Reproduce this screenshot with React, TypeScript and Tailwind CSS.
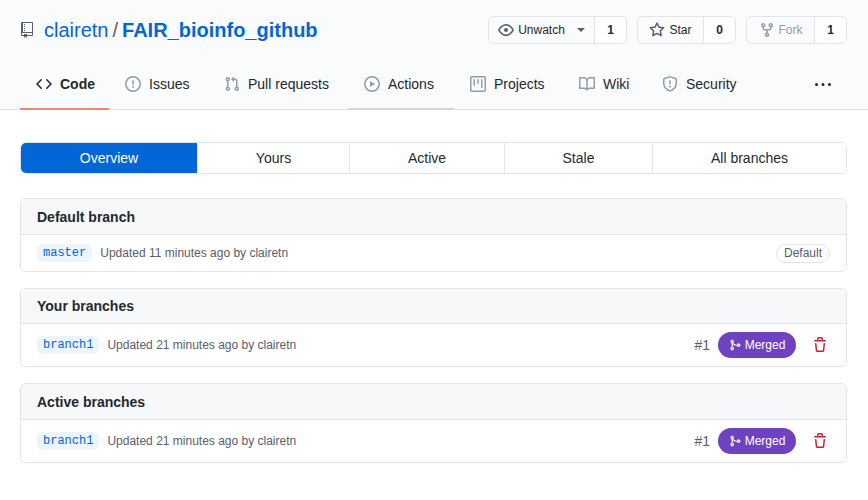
import React from 'react';

const paths = {
	repo: 'M4 9H3V8h1v1zm0-3H3v1h1V6zm0-2H3v1h1V4zm0-2H3v1h1V2zm8-1v12c0 .55-.45 1-1 1H6v2l-1.5-1.5L3 16v-2H1c-.55 0-1-.45-1-1V1c0-.55.45-1 1-1h10c.55 0 1 .45 1 1zm-1 10H1v2h2v-1h3v1h5v-2zm0-10H2v9h9V1z',
	code: 'M4.72 3.22a.75.75 0 011.06 1.06L2.06 8l3.72 3.72a.75.75 0 11-1.06 1.06L.47 8.53a.75.75 0 010-1.06l4.25-4.25zm6.56 0a.75.75 0 10-1.06 1.06L13.94 8l-3.72 3.72a.75.75 0 101.06 1.06l4.25-4.25a.75.75 0 000-1.06l-4.25-4.25z',
	issue: 'M8 1.5a6.5 6.5 0 100 13 6.5 6.5 0 000-13zM0 8a8 8 0 1116 0A8 8 0 010 8zm9 3a1 1 0 11-2 0 1 1 0 012 0zm-.25-6.25a.75.75 0 00-1.5 0v3.5a.75.75 0 001.5 0v-3.5z',
	pull: 'M7.177 3.073L9.573.677A.25.25 0 0110 .854v4.792a.25.25 0 01-.427.177L7.177 3.427a.25.25 0 010-.354zM3.75 2.5a.75.75 0 100 1.5.75.75 0 000-1.5zm-2.25.75a2.25 2.25 0 113 2.122v5.256a2.251 2.251 0 11-1.5 0V5.372A2.25 2.25 0 011.5 3.25zM11 2.5h-1V4h1a1 1 0 011 1v5.628a2.251 2.251 0 101.5 0V5A2.5 2.5 0 0011 2.5zm1 10.25a.75.75 0 111.5 0 .75.75 0 01-1.5 0zM3.75 12a.75.75 0 100 1.5.75.75 0 000-1.5z',
	play: 'M1.5 8a6.5 6.5 0 1113 0 6.5 6.5 0 01-13 0zM8 0a8 8 0 100 16A8 8 0 008 0zM6.379 5.227A.25.25 0 006 5.442v5.117a.25.25 0 00.379.214l4.264-2.559a.25.25 0 000-.428L6.379 5.227z',
	project: 'M1.75 0A1.75 1.75 0 000 1.75v12.5C0 15.216.784 16 1.75 16h12.5A1.75 1.75 0 0016 14.25V1.75A1.75 1.75 0 0014.25 0H1.75zM1.5 1.75a.25.25 0 01.25-.25h12.5a.25.25 0 01.25.25v12.5a.25.25 0 01-.25.25H1.75a.25.25 0 01-.25-.25V1.75zM11.75 3a.75.75 0 00-.75.75v7.5a.75.75 0 001.5 0v-7.5a.75.75 0 00-.75-.75zm-8.25.75a.75.75 0 011.5 0v5.5a.75.75 0 01-1.5 0v-5.5zM8 3a.75.75 0 00-.75.75v3.5a.75.75 0 001.5 0v-3.5A.75.75 0 008 3z',
	book: 'M0 1.75A.75.75 0 01.75 1h4.253c1.227 0 2.317.59 3 1.501A3.744 3.744 0 0111.006 1h4.245a.75.75 0 01.75.75v10.5a.75.75 0 01-.75.75h-4.507a2.25 2.25 0 00-1.591.659l-.622.621a.75.75 0 01-1.06 0l-.622-.621A2.25 2.25 0 005.258 13H.75a.75.75 0 01-.75-.75V1.75zm8.755 3a2.25 2.25 0 012.25-2.25H14.5v9h-3.757c-.71 0-1.4.201-1.992.572l.004-7.322zm-1.504 7.324l.004-5.073-.002-2.253A2.25 2.25 0 005.003 2.5H1.5v9h3.757a3.75 3.75 0 011.994.574z',
	shield: 'M7.467.133a1.75 1.75 0 011.066 0l5.25 1.68A1.75 1.75 0 0115 3.48V7c0 1.566-.32 3.182-1.303 4.682-.983 1.498-2.585 2.813-5.032 3.855a1.7 1.7 0 01-1.33 0c-2.447-1.042-4.049-2.357-5.032-3.855C1.32 10.182 1 8.566 1 7V3.48a1.75 1.75 0 011.217-1.667l5.25-1.68zm.61 1.429a.25.25 0 00-.153 0l-5.25 1.68a.25.25 0 00-.174.238V7c0 1.358.275 2.666 1.057 3.86.784 1.194 2.121 2.34 4.366 3.297a.2.2 0 00.154 0c2.245-.956 3.582-2.104 4.366-3.298C13.225 9.666 13.5 8.36 13.5 7V3.48a.25.25 0 00-.174-.237l-5.25-1.68zM9 10.5a1 1 0 11-2 0 1 1 0 012 0zm-.25-5.75a.75.75 0 10-1.5 0v3a.75.75 0 001.5 0v-3z',
	eye: 'M1.679 7.932c.412-.621 1.242-1.75 2.366-2.717C5.175 4.242 6.527 3.5 8 3.5c1.473 0 2.824.742 3.955 1.715 1.124.967 1.954 2.096 2.366 2.717a.119.119 0 010 .136c-.412.621-1.242 1.75-2.366 2.717C10.825 11.758 9.473 12.5 8 12.5c-1.473 0-2.824-.742-3.955-1.715C2.92 9.818 2.09 8.69 1.679 8.068a.119.119 0 010-.136zM8 2c-1.981 0-3.67.992-4.933 2.078C1.797 5.169.88 6.423.43 7.1a1.619 1.619 0 000 1.798c.45.678 1.367 1.932 2.637 3.024C4.329 13.008 6.019 14 8 14c1.981 0 3.67-.992 4.933-2.078 1.27-1.091 2.187-2.345 2.637-3.023a1.619 1.619 0 000-1.798c-.45-.678-1.367-1.932-2.637-3.023C11.671 2.992 9.981 2 8 2zm0 8a2 2 0 100-4 2 2 0 000 4z',
	star: 'M8 .25a.75.75 0 01.673.418l1.882 3.815 4.21.612a.75.75 0 01.416 1.279l-3.046 2.97.719 4.192a.75.75 0 01-1.088.791L8 12.347l-3.766 1.98a.75.75 0 01-1.088-.79l.72-4.194L.818 6.374a.75.75 0 01.416-1.28l4.21-.611L7.327.668A.75.75 0 018 .25zm0 2.445L6.615 5.5a.75.75 0 01-.564.41l-3.097.45 2.24 2.184a.75.75 0 01.216.664l-.528 3.084 2.769-1.456a.75.75 0 01.698 0l2.77 1.456-.53-3.084a.75.75 0 01.216-.664l2.24-2.183-3.096-.45a.75.75 0 01-.564-.41L8 2.694v.001z',
	fork: 'M5 3.25a.75.75 0 11-1.5 0 .75.75 0 011.5 0zm0 2.122a2.25 2.25 0 10-1.5 0v.878A2.25 2.25 0 005.75 8.5h1.5v2.128a2.251 2.251 0 101.5 0V8.5h1.5a2.25 2.25 0 002.25-2.25v-.878a2.25 2.25 0 10-1.5 0v.878a.75.75 0 01-.75.75h-4.5A.75.75 0 015 6.25v-.878zm3.75 7.378a.75.75 0 11-1.5 0 .75.75 0 011.5 0zm3-8.75a.75.75 0 100-1.5.75.75 0 000 1.5z',
	kebab: 'M8 9a1.5 1.5 0 100-3 1.5 1.5 0 000 3zM1.5 9a1.5 1.5 0 100-3 1.5 1.5 0 000 3zm13 0a1.5 1.5 0 100-3 1.5 1.5 0 000 3z',
	merge: 'M5 3.254V3.25v.005a.75.75 0 110-.005v.004zm.45 1.9a2.25 2.25 0 10-1.95.218v5.256a2.25 2.25 0 101.5 0V7.123A5.735 5.735 0 009.25 9h1.378a2.251 2.251 0 100-1.5H9.25a4.25 4.25 0 01-3.8-2.346zM12.75 9a.75.75 0 100-1.5.75.75 0 000 1.5zm-8.5 4.5a.75.75 0 100-1.5.75.75 0 000 1.5z',
	trash: 'M6.5 1.75a.25.25 0 01.25-.25h2.5a.25.25 0 01.25.25V3h-3V1.75zm4.5 0V3h2.25a.75.75 0 010 1.5H2.75a.75.75 0 010-1.5H5V1.75C5 .784 5.784 0 6.75 0h2.5C10.216 0 11 .784 11 1.75zM4.496 6.675a.75.75 0 10-1.492.15l.66 6.6A1.75 1.75 0 005.405 15h5.19c.9 0 1.652-.681 1.741-1.576l.66-6.6a.75.75 0 00-1.492-.149l-.66 6.6a.25.25 0 01-.249.225h-5.19a.25.25 0 01-.249-.225l-.66-6.6z',
};

const Icon = ({ name, className, box = '0 0 16 16' }: { name: keyof typeof paths; className: string; box?: string }) => (
	<svg viewBox={box} fill="currentColor" fillRule="evenodd" className={`shrink-0 ${className}`}>
		<path d={paths[name]} />
	</svg>
);

const tabs: { label: string; icon: keyof typeof paths; width: string; extra?: string }[] = [
	{ label: 'Code', icon: 'code', width: 'w-[89px]', extra: 'border-[#f9826c] font-bold text-[#24292e]' },
	{ label: 'Issues', icon: 'issue', width: 'w-[99px]' },
	{ label: 'Pull requests', icon: 'pull', width: 'w-[140px]' },
	{ label: 'Actions', icon: 'play', width: 'w-[106px]', extra: 'border-[#d1d5da]' },
	{ label: 'Projects', icon: 'project', width: 'w-[109px]' },
	{ label: 'Wiki', icon: 'book', width: 'w-[83px]' },
	{ label: 'Security', icon: 'shield', width: 'w-[107px]' },
];

const HeadButton = ({ icon, label, count, mainWidth, countWidth, caret, muted }: { icon: keyof typeof paths; label: string; count: string; mainWidth: string; countWidth: string; caret?: boolean; muted?: boolean }) => (
	<div className="flex h-7 rounded-md border border-[#e1e4e8] text-xs">
		<div className={`flex items-center justify-center gap-1 rounded-l-md bg-[#fafbfc] ${mainWidth} ${muted ? 'text-[#959da5]' : 'text-[#24292e]'}`}>
			<Icon name={icon} className={`h-4 w-4 ${muted ? 'text-[#959da5]' : 'text-[#586069]'}`} />
			<span>{label}</span>
			{caret && <span className="ml-2 h-0 w-0 border-x-4 border-t-4 border-x-transparent border-t-[#586069]" />}
		</div>
		<div className={`flex items-center justify-center rounded-r-md border-l border-[#e1e4e8] bg-white font-bold text-[#24292e] ${countWidth}`}>{count}</div>
	</div>
);

const segments = [
	{ label: 'Overview', width: 'w-[177px]', active: true },
	{ label: 'Yours', width: 'w-[152px]' },
	{ label: 'Active', width: 'w-[155px]' },
	{ label: 'Stale', width: 'w-[148px]' },
	{ label: 'All branches', width: 'flex-1' },
];

const BranchCard = ({ title, branch, updated, rowClass, headerClass, merged }: { title: string; branch: string; updated: string; rowClass: string; headerClass: string; merged?: boolean }) => (
	<div className="rounded-md border border-[#e1e4e8] bg-white">
		<div className={`flex items-center rounded-t-md border-b border-[#e1e4e8] bg-[#f6f8fa] px-4 text-sm font-bold text-[#24292e] ${headerClass}`}>{title}</div>
		<div className={`flex items-center px-4 ${rowClass}`}>
			<span className="flex h-[18px] items-center rounded-md bg-[#eaf5ff] px-1.5 text-xs text-[#0366d6] [font-family:'Liberation_Mono',monospace]">{branch}</span>
			<span className="ml-2 text-xs text-[#586069]">{updated}</span>
			<div className="ml-auto flex items-center">
				{merged ? (
					<>
						<span className="text-sm text-[#586069]">#1</span>
						<span className="ml-2 flex h-[26px] w-[78px] items-center justify-center gap-1 rounded-full bg-[#6f42c1] text-xs text-white">
							<Icon name="merge" className="h-3 w-3" />
							Merged
						</span>
						<Icon name="trash" className="ml-4 mr-0.5 h-4 w-4 text-[#cb2431]" />
					</>
				) : (
					<span className="flex h-[19px] items-center rounded-full border border-[#e1e4e8] px-[7px] text-xs text-[#586069]">Default</span>
				)}
			</div>
		</div>
	</div>
);

const App = () => {
	return (
		<div className="h-[500px] w-[868px] overflow-hidden bg-white text-[#24292e] [font-family:'Liberation_Sans',Arial,sans-serif]">
			{/* Repo header */}
			<div className="h-[110px] border-b border-[#e1e4e8] bg-[#fafbfc]">
				<div className="flex h-[60px] items-start justify-between pl-[21px] pr-[21px] pt-4">
					<div className="flex h-7 items-center text-xl">
						<Icon name="repo" box="0 0 12 16" className="mr-[11px] h-4 w-3 text-[#586069]" />
						<span className="text-[#0366d6]">clairetn</span>
						<span className="mx-1 text-[#586069]">/</span>
						<span className="font-bold text-[#0366d6]">FAIR_bioinfo_github</span>
					</div>
					<div className="flex gap-2.5">
						<HeadButton icon="eye" label="Unwatch" count="1" caret mainWidth="w-[105px]" countWidth="w-[32px]" />
						<HeadButton icon="star" label="Star" count="0" mainWidth="w-[65px]" countWidth="w-[32px]" />
						<HeadButton icon="fork" label="Fork" count="1" muted mainWidth="w-[67px]" countWidth="w-[32px]" />
					</div>
				</div>
				<div className="flex h-[50px] pl-5">
					{tabs.map((tab) => (
						<div key={tab.label} className={`flex items-center gap-2 border-b-2 pl-4 text-sm text-[#24292e] ${tab.width} ${tab.extra ?? 'border-transparent'}`}>
							<Icon name={tab.icon} className={`h-4 w-4 ${tab.label === 'Code' ? 'text-[#24292e]' : 'text-[#959da5]'}`} />
							<span>{tab.label}</span>
						</div>
					))}
					<div className="flex flex-1 items-center justify-end pr-[37px]">
						<Icon name="kebab" className="h-4 w-4 text-[#24292e]" />
					</div>
				</div>
			</div>

			{/* Branch content */}
			<div className="px-5 pt-8 pr-[21px]">
				<div className="flex h-8 overflow-hidden rounded-md border border-[#e1e4e8] text-sm">
					{segments.map((seg) => (
						<div key={seg.label} className={`flex items-center justify-center border-r border-[#e1e4e8] last:border-r-0 ${seg.width} ${seg.active ? 'bg-[#0366d6] text-white' : 'bg-white text-[#24292e]'}`}>
							{seg.label}
						</div>
					))}
				</div>
				<div className="mt-6 flex flex-col gap-4">
					<BranchCard title="Default branch" branch="master" updated="Updated 11 minutes ago by clairetn" headerClass="h-9" rowClass="h-[36px]" />
					<BranchCard title="Your branches" branch="branch1" updated="Updated 21 minutes ago by clairetn" headerClass="h-[35px]" rowClass="h-[42px]" merged />
					<BranchCard title="Active branches" branch="branch1" updated="Updated 21 minutes ago by clairetn" headerClass="h-9" rowClass="h-[42px]" merged />
				</div>
			</div>
		</div>
	);
};

export default App;
